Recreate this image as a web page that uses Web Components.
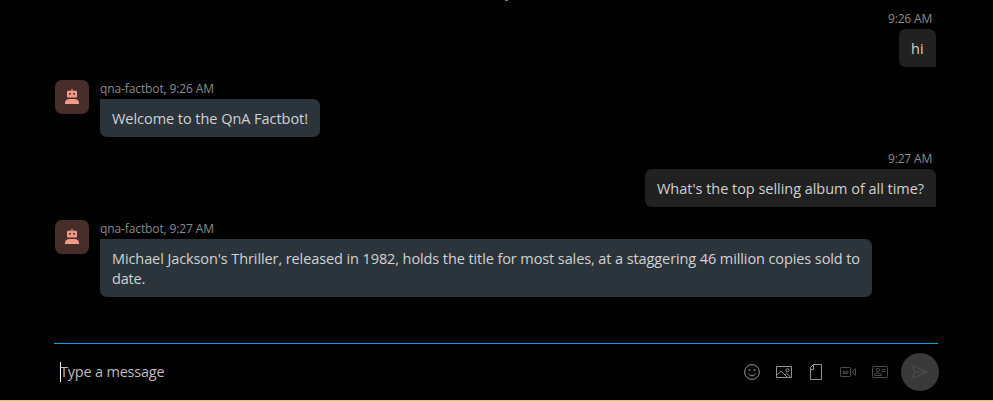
<!DOCTYPE html>
<html lang="en">
<head>
<meta charset="utf-8">
<title>Chat</title>
<style>
html,body{margin:0;height:100%;background:#000;overflow:hidden}
body{font-family:"Open Sans","Noto Sans",sans-serif;color:#d2d2d2}
</style>
</head>
<body>
<chat-window></chat-window>
<script>
const define = (name, markup, setup) => customElements.define(name, class extends HTMLElement {
  constructor() {
    super();
    this.attachShadow({mode: 'open'}).innerHTML = typeof markup === 'function' ? markup(this) : markup;
  }
  connectedCallback() { if (setup) setup(this); }
});

/* A line of text whose tracking is adjusted to a given measure. */
define('text-line', `<style>:host{display:block;white-space:pre;width:max-content}span{display:inline-block}</style><span><slot></slot></span>`, el => {
  const target = Number(el.getAttribute('measure'));
  const span = el.shadowRoot.querySelector('span');
  const width = span.getBoundingClientRect().width;
  const count = el.textContent.length;
  if (target && count) {
    span.style.letterSpacing = ((target - width) / count).toFixed(4) + 'px';
    el.style.width = target + 'px';
  }
});

define('bot-avatar', `<style>
:host{display:block;flex:none;width:34px;height:34px;border-radius:7px;background:#482e2b}
svg{display:block}
</style>
<svg width="34" height="34" viewBox="0 0 34 34" fill="#f29a88">
<path d="M16.4 9h1.2v1.8h3.2q1.2 0 1.2 1.2v4.4q0 1.2-1.2 1.2h-7.6q-1.2 0-1.2-1.2V12q0-1.2 1.2-1.2h3.2z"/>
<path d="M14.1 13h1.7v1.8h-1.7zM18.2 13h1.7v1.8h-1.7z" fill="#482e2b"/>
<path d="M10 24v-1.2q0-3.9 5-3.9h4q5 0 5 3.9V24z"/>
</svg>`);

define('chat-message', `<style>
:host{display:flex;flex-direction:row;height:57px;gap:11px}
:host([own]){justify-content:flex-end}
:host([own]) bot-avatar{display:none}
:host([tall]){height:77px}
.column{display:flex;flex-direction:column;align-items:flex-start}
:host([own]) .column{align-items:flex-end}
.meta{height:19px;line-height:18px;font-size:12px;color:#8b8b8b}
:host([own]) .meta{margin-right:4px}
.bubble{box-sizing:border-box;flex:1;padding:10px 12px 8px;border-radius:0 7px 7px 7px;background:#2c343b;font-size:14.5px;line-height:20px;color:#d0d2d3}
:host([own]) .bubble{background:#212121;border-radius:7px 7px 0 7px;color:#d0d0d0}
</style>
<bot-avatar></bot-avatar>
<div class="column"><div class="meta"><slot name="meta"></slot></div><div class="bubble"><slot></slot></div></div>`);

const icons = {
  smile: '<circle cx="8" cy="8" r="7.4"/><path d="M4.5 10q3.5 3.5 7 0"/><path d="M4.7 6h1.6M9.7 6h1.6" stroke-width="1.6"/>',
  image: '<path d="M.5 2.5h15v11H.5zM.7 11.5 5 7l6.5 6.5M9 10.7l1.5-1.4 4 3.8"/><circle cx="11.5" cy="6.2" r="1.6"/>',
  file: '<path d="M5.5.5h8v15h-11v-12zM5.5.5v5h-3"/>',
  video: '<rect x=".5" y="3.5" width="10" height="9" rx=".8"/><path d="M15.5 4.8v6.5L12.7 9V7.1z"/><circle cx="3.8" cy="8" r="1"/><circle cx="7.2" cy="8" r="1"/><path d="M3.2 9.4h4.6"/>',
  card: '<rect x=".5" y="2.5" width="15" height="11" rx=".8"/><circle cx="6" cy="6" r="1.6"/><path d="M2.6 11.5q0-2.4 2-2.4h2.8q2 0 2 2.4zM9.6 5.5h4M9.6 7.5h4"/>',
  send: '<path d="M.8 1.8 15.3 8 .8 14.2 2.5 8zM2.5 8h12.3"/>'
};
define('line-icon', el => `<style>
:host{display:block;width:16px;height:16px;color:#929292}
:host([dim]){color:#4c4c4c}
svg{display:block;overflow:visible;fill:none;stroke:currentColor;stroke-width:1}
</style><svg width="16" height="16" viewBox="0 0 16 16">${icons[el.getAttribute('name')]}</svg>`);

define('message-composer', `<style>
:host{display:flex;box-sizing:border-box;height:57px;margin:0 55px 0 54px;border-top:1px solid #109fe2;align-items:center;padding-left:6px}
.field{flex:1;display:flex;align-items:center;height:20px;box-shadow:inset 1px 0 #fff;font-size:14.5px;line-height:20px;color:#bdbdbd}
.tools{display:flex;gap:16px;margin-right:13px}
.send{width:38px;height:38px;border-radius:50%;background:#393939;display:flex;align-items:center;justify-content:center;margin-right:-1px}
.send line-icon{color:#505050}
</style>
<div class="field"><text-line measure="104.5">Type a message</text-line></div>
<div class="tools"><line-icon name="smile"></line-icon><line-icon name="image"></line-icon><line-icon name="file"></line-icon><line-icon name="video" dim></line-icon><line-icon name="card" dim></line-icon></div>
<div class="send"><line-icon name="send"></line-icon></div>`);

define('chat-window', `<style>
:host{display:flex;flex-direction:column;box-sizing:border-box;width:993px;height:401px;background:#000;border-bottom:1px solid #d2ce58}
.clip{width:3px;height:1px;margin-left:505px;background:#777;flex:none}
.thread{box-sizing:border-box;flex:1;display:flex;flex-direction:column;gap:13px;padding:9px 57px 0 55px}
message-composer{flex:none}
</style>
<div class="clip"></div>
<div class="thread">
<chat-message own><text-line slot="meta" measure="44">9:26 AM</text-line><text-line measure="13">hi</text-line></chat-message>
<chat-message><text-line slot="meta" measure="114">qna-factbot, 9:26 AM</text-line><text-line measure="196">Welcome to the QnA Factbot!</text-line></chat-message>
<chat-message own><text-line slot="meta" measure="44">9:27 AM</text-line><text-line measure="267">What's the top selling album of all time?</text-line></chat-message>
<chat-message tall><text-line slot="meta" measure="114">qna-factbot, 9:27 AM</text-line><text-line measure="748">Michael Jackson's Thriller, released in 1982, holds the title for most sales, at a staggering 46 million copies sold to</text-line><text-line measure="33">date.</text-line></chat-message>
</div>
<message-composer></message-composer>`);
</script>
</body>
</html>
